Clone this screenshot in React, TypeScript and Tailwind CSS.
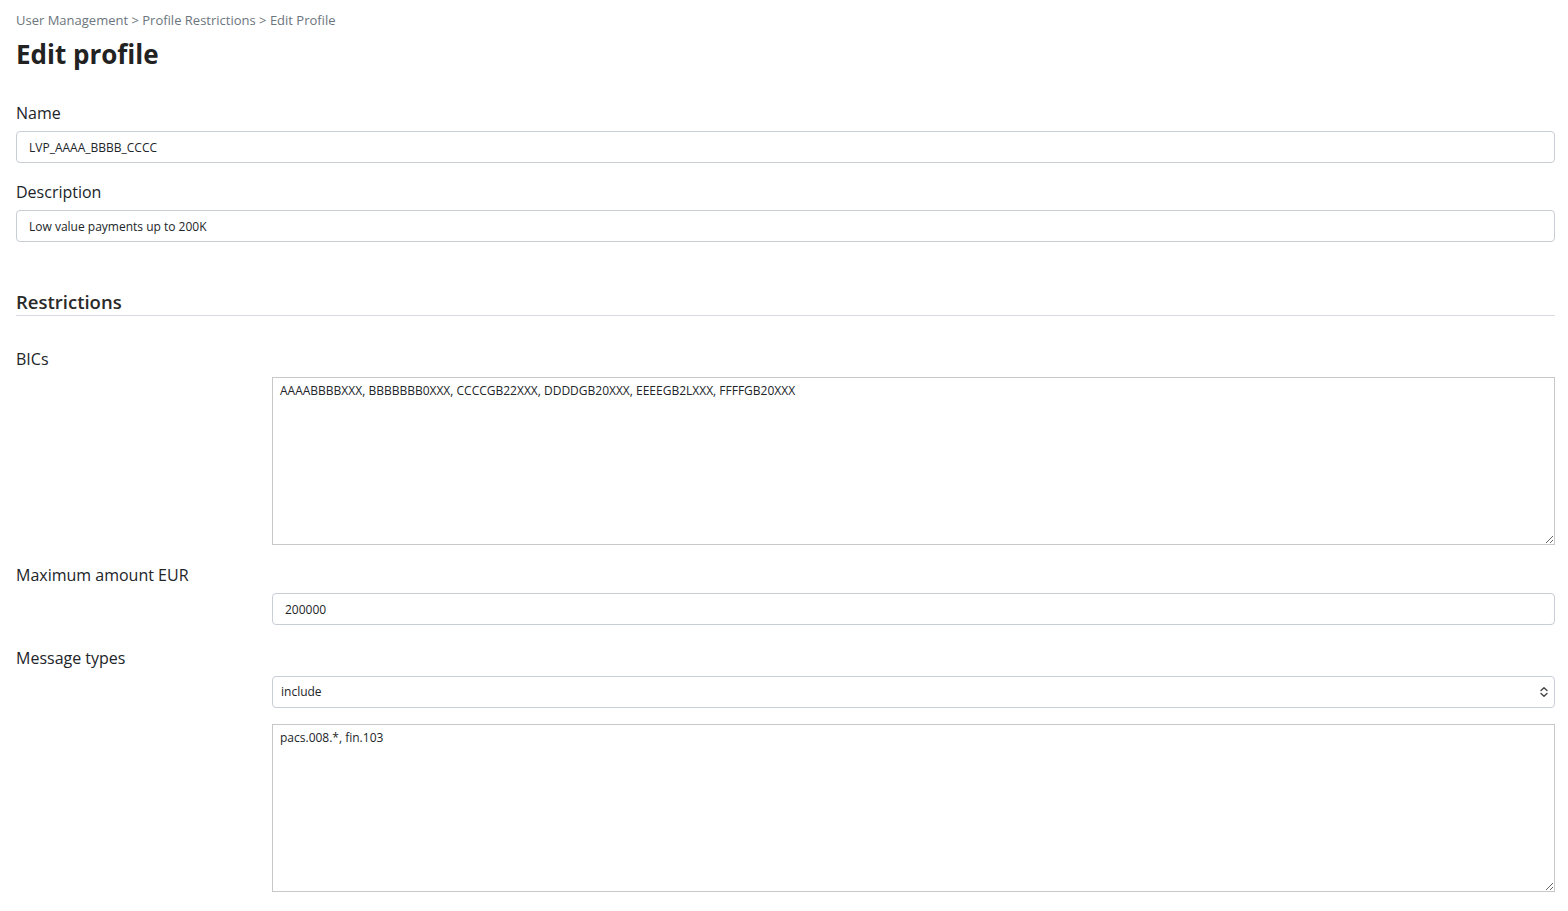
import React from "react";

const font = { fontFamily: '"Open Sans", "Liberation Sans", sans-serif' };

export default function App() {
  return (
    <div className="bg-white min-h-screen pl-4 pr-[13px] text-[#212529]" style={font}>
      <div className="pt-[11px] text-[13px] leading-[18px] text-[#6c757d]">
        User Management &gt; Profile Restrictions &gt; Edit Profile
      </div>
      <h1 className="mt-[9px] text-[26px] leading-[32px] font-bold text-[#222]">Edit profile</h1>

      <label className="block mt-[32px] text-[16px] leading-[22px]">Name</label>
      <input
        readOnly
        defaultValue="LVP_AAAA_BBBB_CCCC"
        className="block mt-[7px] w-full h-[32px] rounded-[4px] border border-[#c9cdd6] px-3 text-[12px] text-[#212529] outline-none"
      />

      <label className="block mt-[18px] text-[16px] leading-[22px]">Description</label>
      <input
        readOnly
        defaultValue="Low value payments up to 200K"
        className="block mt-[7px] w-full h-[32px] rounded-[4px] border border-[#c9cdd6] px-3 text-[12px] text-[#212529] outline-none"
      />

      <h2 className="mt-[46px] text-[18.5px] leading-[28px] font-semibold text-[#2a2a2a]">Restrictions</h2>
      <div className="mt-[-1px] border-b border-[#d8dbe0]" />

      <label className="block mt-[32px] text-[16px] leading-[22px]">BICs</label>
      <div className="ml-[256px] mt-[7px]">
        <textarea
          readOnly
          defaultValue="AAAABBBBXXX, BBBBBBB0XXX, CCCCGB22XXX, DDDDGB20XXX, EEEEGB2LXXX, FFFFGB20XXX"
          className="block w-full h-[168px] border border-[#c8c8c8] px-[7px] py-[4px] text-[12px] leading-[18px] text-[#212529] outline-none resize-y"
        />
      </div>

      <label className="block mt-[19px] text-[16px] leading-[22px]">Maximum amount EUR</label>
      <div className="ml-[256px] mt-[7px]">
        <input
          readOnly
          defaultValue="200000"
          className="block w-full h-[32px] rounded-[4px] border border-[#c9cdd6] px-3 text-[12px] text-[#212529] outline-none"
        />
      </div>

      <label className="block mt-[22px] text-[16px] leading-[22px]">Message types</label>
      <div className="ml-[256px] mt-[7px]">
        <div className="relative">
          <select
            defaultValue="include"
            className="block w-full h-[32px] appearance-none rounded-[4px] border border-[#c9cdd6] bg-white pl-2 pr-8 text-[12px] text-[#212529] outline-none"
          >
            <option value="include">include</option>
            <option value="exclude">exclude</option>
          </select>
          <svg
            className="pointer-events-none absolute right-[6px] top-1/2 -translate-y-1/2"
            width="10"
            height="12"
            viewBox="0 0 10 12"
            fill="none"
            stroke="#444"
            strokeWidth="1.4"
            strokeLinecap="round"
            strokeLinejoin="round"
          >
            <path d="M2 4.5 L5 1.8 L8 4.5" />
            <path d="M2 7.5 L5 10.2 L8 7.5" />
          </svg>
        </div>
        <textarea
          readOnly
          defaultValue="pacs.008.*, fin.103"
          className="block mt-[16px] w-full h-[168px] border border-[#c8c8c8] px-[7px] py-[4px] text-[12px] leading-[18px] text-[#212529] outline-none resize-y"
        />
      </div>
    </div>
  );
}
